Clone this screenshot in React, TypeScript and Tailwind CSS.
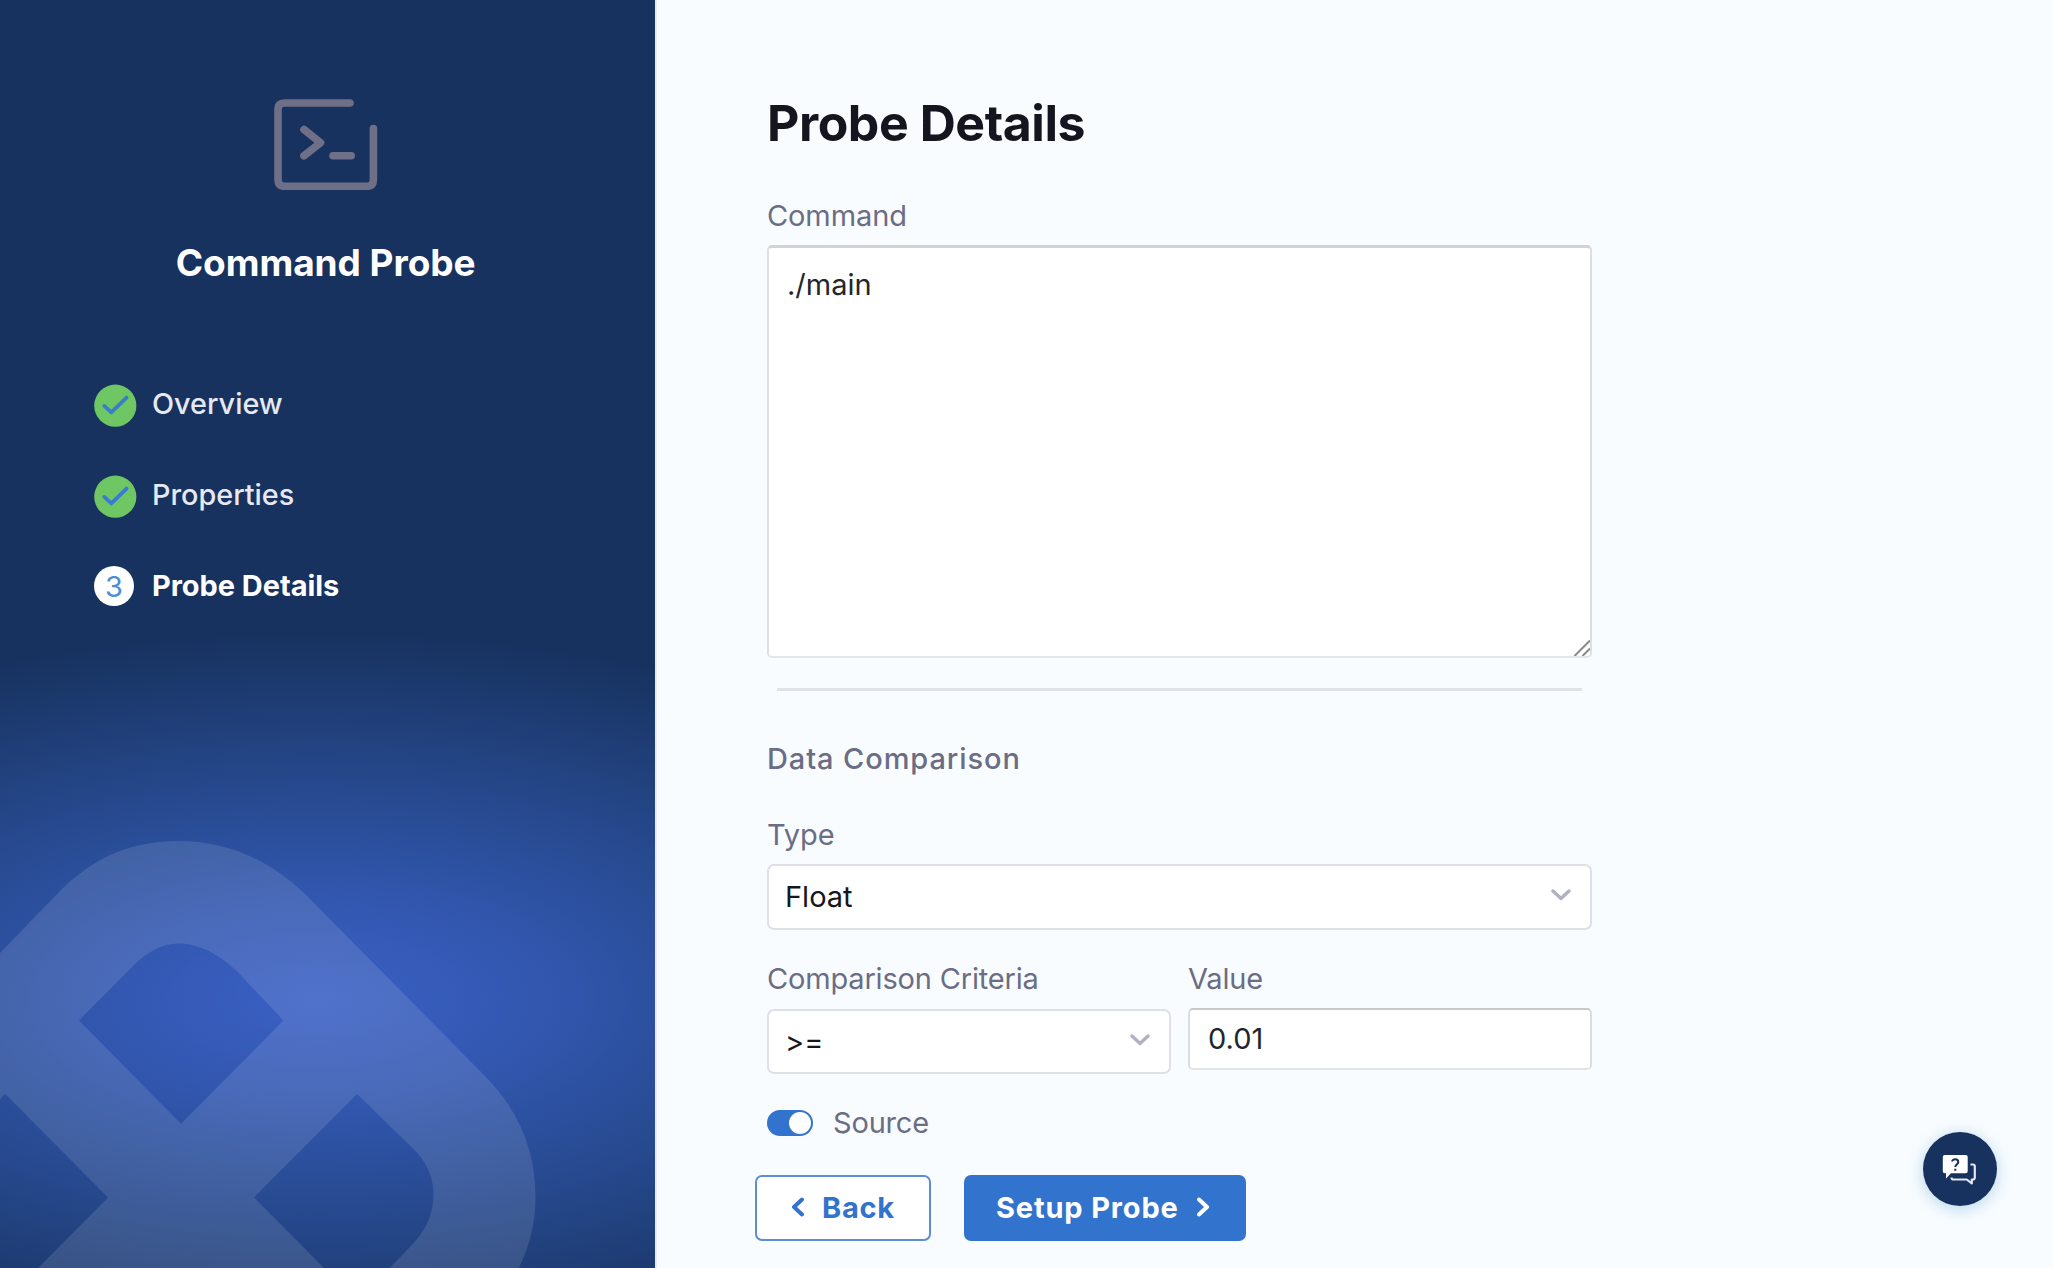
import type { ReactNode } from "react";

const INK = "text-[#6b6d85]";

function CommandIcon() {
  return (
    <svg width="104" height="92" viewBox="274 98.5 104 92" fill="none" stroke="#6f7087" strokeWidth="7.6" strokeLinecap="round" strokeLinejoin="round">
      <path d="M350 103.500H284.500Q278 103.500 278 110V180Q278 186.800 284.500 186.800H367Q373.400 186.800 373.400 180V129" />
      <path d="M304 130L320.500 143.200L304 156.300M333 156.300H351.200" />
    </svg>
  );
}

function CheckBadge() {
  return (
    <svg width="43" height="43" viewBox="0 0 43 43" fill="none">
      <circle cx="21.300" cy="21.700" r="21.100" fill="#6fc763" />
      <path d="M10.300 21.900L17.300 28.400L32.600 13.600" stroke="#3a7bd0" strokeWidth="3.800" strokeLinecap="round" strokeLinejoin="round" />
    </svg>
  );
}

function Step({ label, badge, active = false }: { label: string; badge: ReactNode; active?: boolean }) {
  return (
    <li className="flex h-[91px] items-start">
      <span className="flex w-[58px] items-center">{badge}</span>
      <span className={active ? "pt-px text-[29px] leading-[38px] font-bold tracking-[-0.050px] text-white" : "pt-px text-[28.800px] leading-[38px] font-medium text-[#e6e9f1]"}>
        {label}
      </span>
    </li>
  );
}

function Chevron({ d, w, h, color, sw }: { d: string; w: number; h: number; color: string; sw: number }) {
  return (
    <svg width={w} height={h} viewBox={`0 0 ${w} ${h}`} fill="none" stroke={color} strokeWidth={sw} strokeLinecap="round" strokeLinejoin="round">
      <path d={d} />
    </svg>
  );
}

function Select({ value, className }: { value: string; className: string }) {
  return (
    <div className={`flex items-center justify-between rounded-[7px] border-2 border-[#dfdfe9] bg-white pr-[19px] pl-[16px] text-[29px] leading-none text-[#16171d] ${className}`}>
      <span>{value}</span>
      <span className="mb-[4px]">
        <Chevron d="M2 2L10 9.500L18 2" w={20} h={12} color="#b0b1c3" sw={3.4} />
      </span>
    </div>
  );
}

function Sidebar() {
  return (
    <aside className="relative h-full w-[655px] shrink-0 overflow-hidden bg-[#17325f]">
      <div className="absolute inset-0 bg-[radial-gradient(800px_368px_at_318px_1000px,#3a60c4_0%,#3358b2_25%,#2b4f9c_45%,#22427f_71%,#17325f_100%)]" />
      <svg className="absolute bottom-0 left-0" width="655" height="448" viewBox="0 820 655 448">
        <path
          fill="#ffffff"
          fillOpacity="0.115"
          fillRule="evenodd"
          d="M0 953L62 889C97 855 134 841 179 841C225 841 270 859 307 896L484 1075C520 1111.500 535.500 1152 535.500 1197C535.500 1222 530 1245 519 1268H389.500L409 1248C426 1231 433.500 1214 433.500 1194.500C433.500 1178 427 1163 415 1150.500L357 1094L254 1197.500L324 1268H38L108 1197.500L5 1093.700L0 1099.500ZM79 1020.500L131 968C147 952 162 943.600 179 943.600C200 943.600 222 956 240 974.400L283.400 1020.500L181 1123.800Z"
        />
      </svg>
      <div className="relative flex flex-col pt-[98px]">
        <div className="pl-[274px]">
          <CommandIcon />
        </div>
        <h2 className="mt-[49px] pl-[175.800px] text-[37px] leading-[48px] font-bold tracking-[-0.050px] text-white">Command Probe</h2>
        <ul className="mt-[97px] pl-[94px]">
          <Step label="Overview" badge={<CheckBadge />} />
          <Step label="Properties" badge={<CheckBadge />} />
          <Step
            label="Probe Details"
            active
            badge={<span className="flex h-[40px] w-[40px] items-center justify-center rounded-full bg-white text-[29px] leading-none text-[#4a8fd6]">3</span>}
          />
        </ul>
      </div>
    </aside>
  );
}

function Details() {
  return (
    <main className="flex grow flex-col border-l-2 border-[#e6eaf1] pt-[93px] pl-[110px]">
      <h1 className="pb-px text-[50px] leading-[60px] font-bold tracking-[-0.450px] text-[#14151e]">Probe Details</h1>
      <div className="w-[825px]">
        <label className={`mt-[44px] block text-[29px] leading-[36px] tracking-[-0.100px] ${INK}`}>Command</label>
        <div className="mt-[11px] flex h-[413px] flex-col justify-between rounded-[5px] border-2 border-t-[3px] border-[#dedfe1] border-t-[#d2d3d6] border-b-[#e4e5e8] bg-white">
          <p className="pt-[19px] pl-[18px] text-[29px] leading-[36px] text-[#22272d]">./main</p>
          <svg className="self-end" width="17" height="17" viewBox="0 0 17 17" stroke="#8a8a8a" strokeWidth="2">
            <path d="M1.500 17L17 1.500M9.500 17L17 9.500" />
          </svg>
        </div>
        <div className="mx-[10px] mt-[30px] h-[3px] bg-[#dfe3e9]" />
        <h3 className={`mt-[50px] text-[29px] leading-[36px] font-medium tracking-[0.900px] ${INK}`}>Data Comparison</h3>
        <label className={`mt-[40px] block text-[29px] leading-[36px] tracking-[-0.100px] ${INK}`}>Type</label>
        <Select value="Float" className="mt-[11px] h-[66px] pb-px" />
        <div className="mt-[31px] flex justify-between">
          <div className="w-[404px]">
            <label className={`block text-[29px] leading-[36px] tracking-[-0.180px] ${INK}`}>Comparison Criteria</label>
            <Select value=">=" className="mt-[12px] h-[65px]" />
          </div>
          <div className="w-[404px]">
            <label className={`block text-[29px] leading-[36px] tracking-[-0.180px] ${INK}`}>Value</label>
            <div className="mt-[11px] h-[62px] rounded-[5px] border-2 border-[#dcdde0] border-t-[#c6c8cb] border-b-[#e2e3e6] bg-white pt-[10px] pl-[18px] text-[29px] leading-[38px] text-[#22272d]">0.01</div>
          </div>
        </div>
        <div className="mt-[31px] flex h-[36px] items-center">
          <span className="-mt-px flex h-[26px] w-[46px] items-center justify-end rounded-full bg-[#3273cd] pr-[2px]">
            <span className="h-[22px] w-[22px] rounded-full bg-white" />
          </span>
          <span className={`pl-[20px] text-[29px] leading-[36px] tracking-[-0.180px] ${INK}`}>Source</span>
        </div>
      </div>
      <div className="mt-[34px] -ml-[12px] flex">
        <button className="flex h-[66px] w-[176px] items-center rounded-[7px] border-2 border-[#5b8dd8] bg-white pb-[2px] pl-[33px] text-[29px] leading-none font-bold tracking-[0.750px] text-[#3273cd]">
          <Chevron d="M12 2.500L4 10L12 17.500" w={15} h={20} color="#3273cd" sw={4} />
          <span className="ml-[17px]">Back</span>
        </button>
        <button className="ml-[33px] flex h-[66px] w-[282px] items-center rounded-[7px] bg-[#3273cd] pb-[2px] pl-[32px] text-[29px] leading-none font-bold tracking-[0.850px] text-white">
          <span>Setup Probe</span>
          <span className="ml-[17px]">
            <Chevron d="M3 2.500L11 10L3 17.500" w={15} h={20} color="#ffffff" sw={4} />
          </span>
        </button>
      </div>
    </main>
  );
}

function ChatButton() {
  return (
    <button className="absolute top-[1132px] left-[1923px] flex h-[74px] w-[74px] items-center justify-center rounded-full bg-[#17325f] shadow-[0_3px_14px_2px_rgba(110,180,215,0.38)]">
      <svg width="74" height="74" viewBox="1923.5 1132 74 74" fill="none">
        <path d="M1971 1164.500H1973.500Q1975.300 1164.500 1975.300 1166.500V1177.500Q1975.300 1179.500 1973.300 1179.500H1972.300V1183.500L1967.300 1179.500H1954Q1952 1179.500 1952 1177.500" stroke="#e3e7ef" strokeWidth="2.200" strokeLinejoin="round" />
        <path d="M1945.300 1155H1966.200Q1968.200 1155 1968.200 1157V1171.300Q1968.200 1173.300 1966.200 1173.300H1951.500L1946.500 1178.500V1173.300H1945.300Q1943.300 1173.300 1943.300 1171.300V1157Q1943.300 1155 1945.300 1155Z" fill="#fff" />
        <path d="M1952.700 1161.500C1952.700 1158.500 1958.800 1158.500 1958.800 1162C1958.800 1164.500 1955.800 1164.500 1955.800 1167M1955.800 1168.800V1170.800" stroke="#17325f" strokeWidth="2" />
      </svg>
    </button>
  );
}

export default function App() {
  return (
    <div className="relative flex h-[1268px] w-[2053px] overflow-hidden bg-[#f8fcff] font-['Inter',sans-serif]">
      <Sidebar />
      <Details />
      <ChatButton />
    </div>
  );
}
